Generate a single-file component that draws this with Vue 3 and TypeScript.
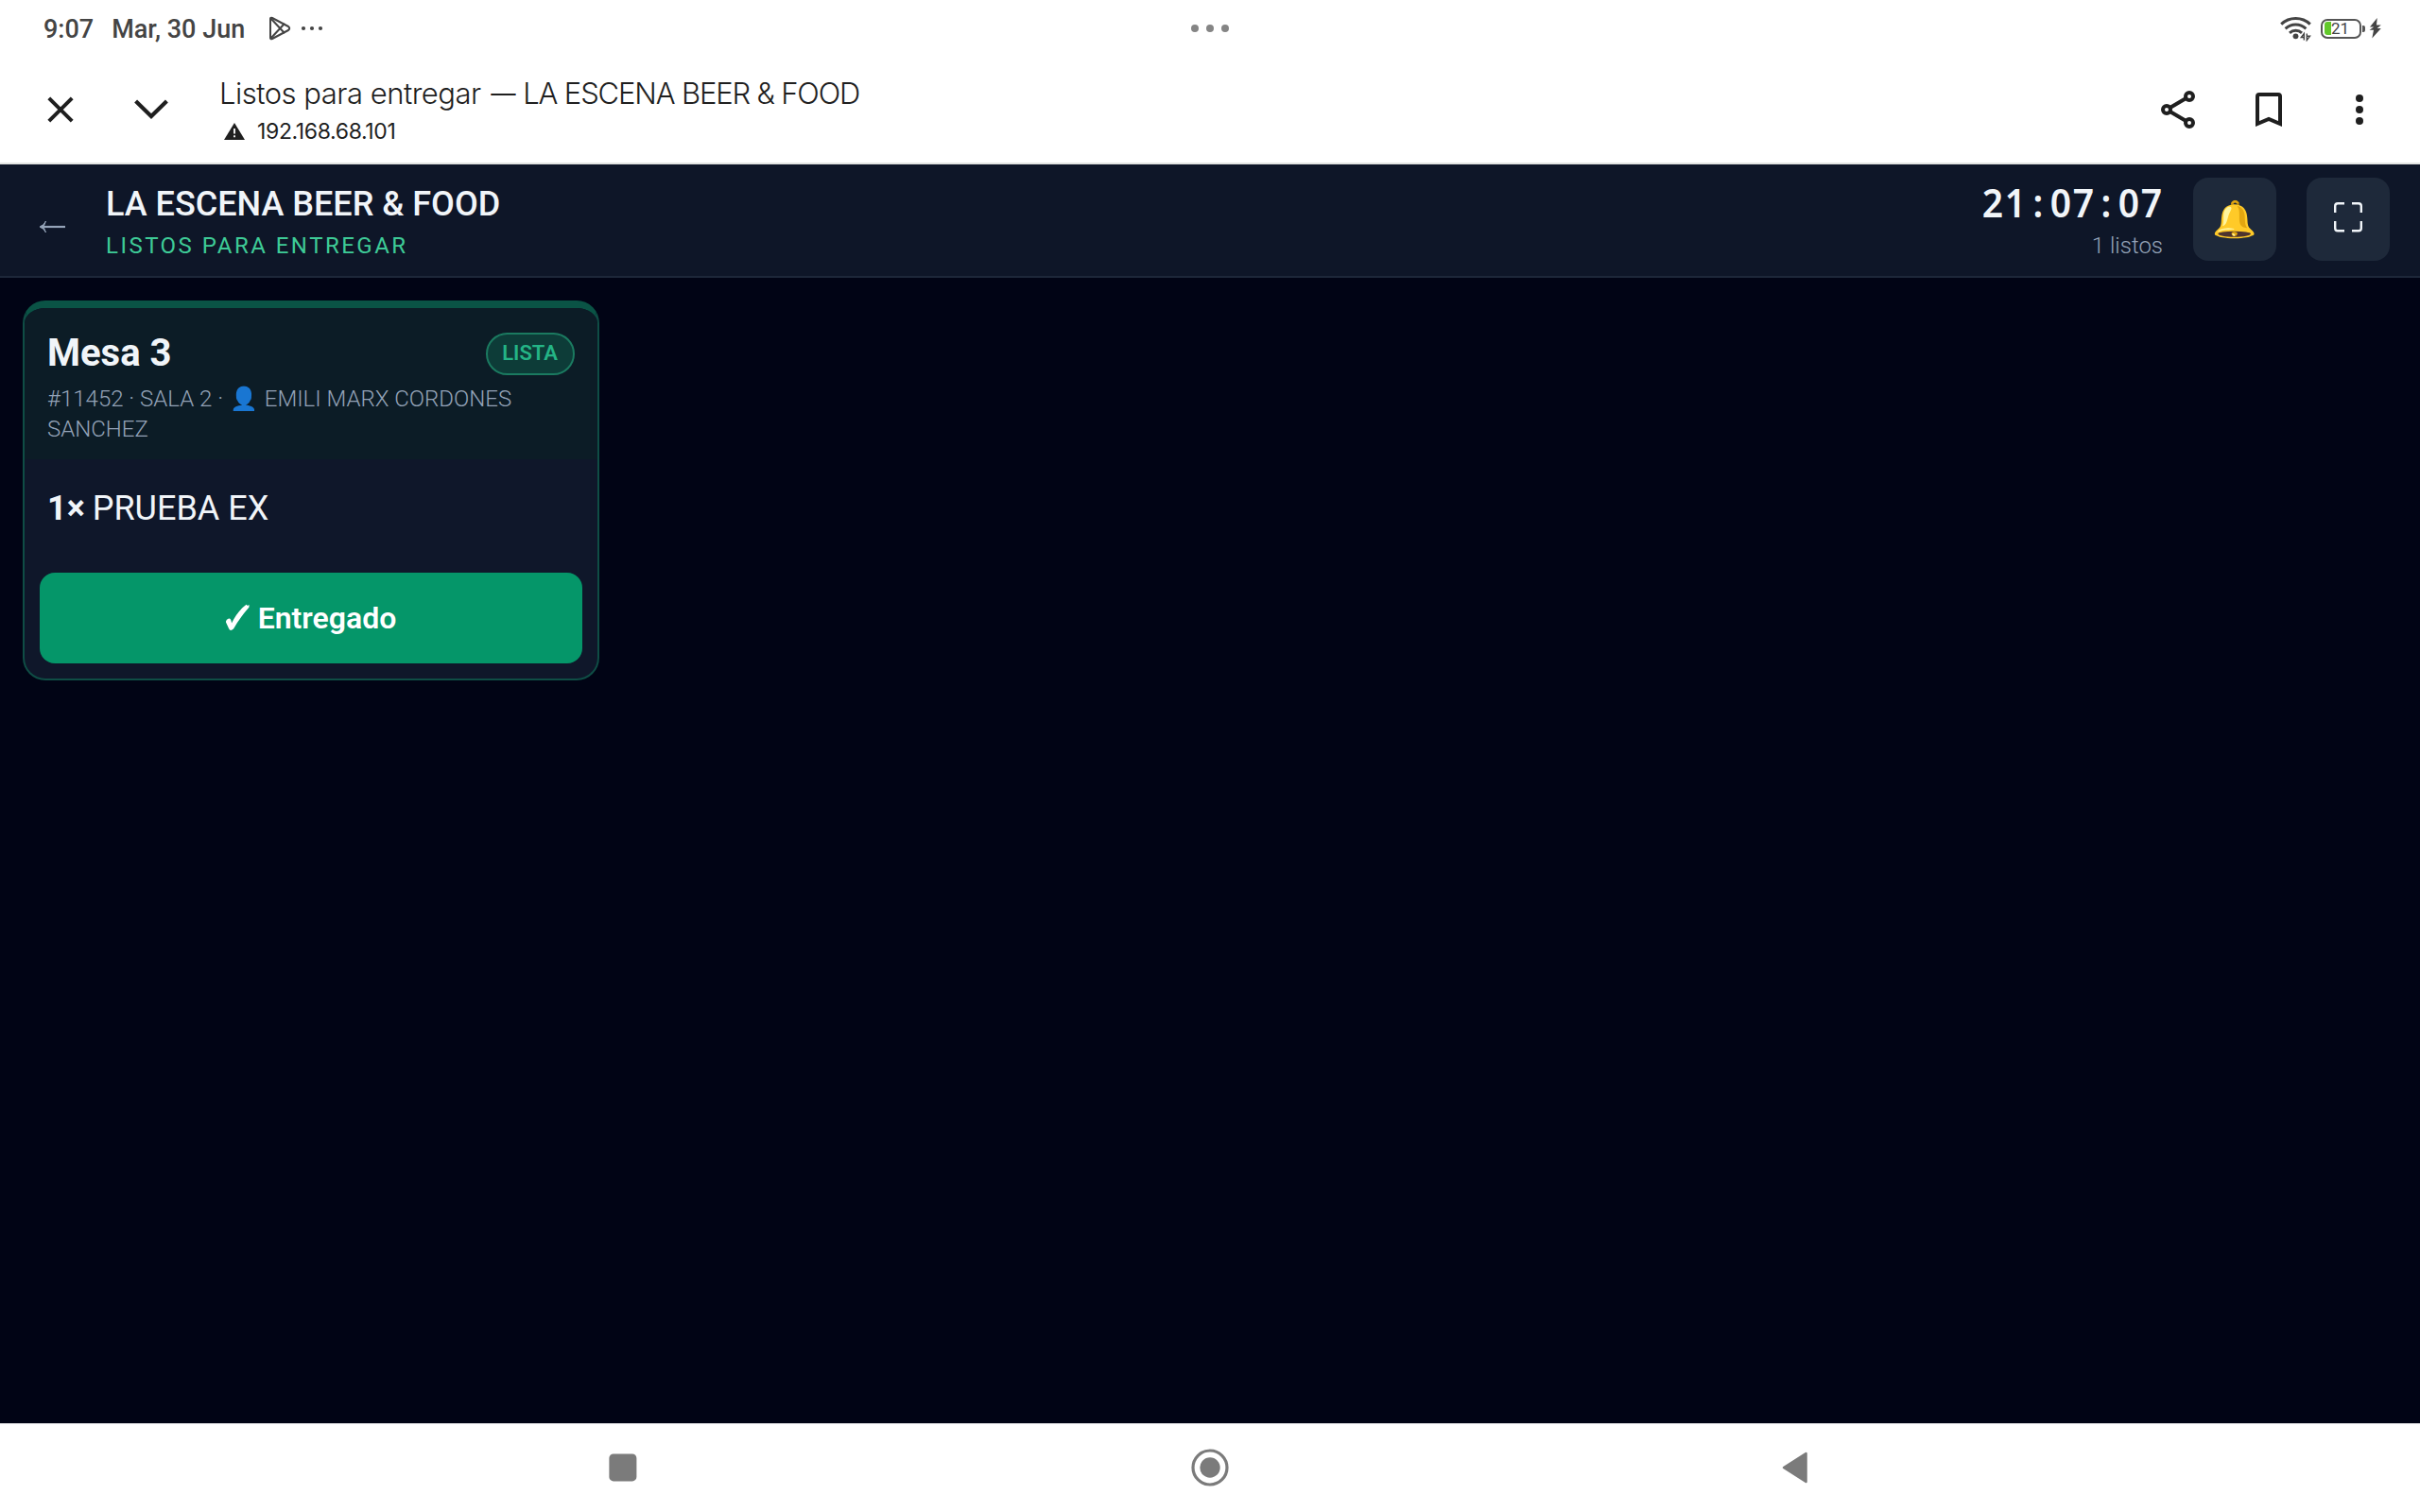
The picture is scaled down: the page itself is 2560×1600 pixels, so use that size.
<script setup lang="ts">
import { ref } from 'vue'

interface OrderItem {
  qty: number
  name: string
}
interface Order {
  id: number
  table: string
  room: string
  waiter: string
  status: string
  items: OrderItem[]
}

const clock = ref('21:07:07')
const orders = ref<Order[]>([
  {
    id: 11452,
    table: 'Mesa 3',
    room: 'SALA 2',
    waiter: 'EMILI MARX CORDONES SANCHEZ',
    status: 'LISTA',
    items: [{ qty: 1, name: 'PRUEBA EX' }],
  },
])
</script>

<template>
  <div class="screen">
    <div class="status">
      <div class="status-left">
        <span class="time">9:07</span>
        <span class="date">Mar, 30 Jun</span>
        <svg class="play" width="24" height="26" viewBox="0 0 24 26" fill="none" stroke="#444" stroke-width="2" stroke-linejoin="round" stroke-linecap="round">
          <path d="M2 3.2Q2 1.2 4 2L21 11Q23.4 13 21 15L4 24Q2 24.8 2 22.800Z" />
          <path d="M2.500 2.500L16.500 17.500M2.500 23.500L16.500 8.500" />
        </svg>
        <svg class="more" width="24" height="6" viewBox="0 0 24 6" fill="#444">
          <circle cx="3" cy="3" r="2.100" /><circle cx="12" cy="3" r="2.100" /><circle cx="21" cy="3" r="2.100" />
        </svg>
      </div>
      <svg class="handle" width="40" height="8" viewBox="0 0 40 8" fill="#858585">
        <circle cx="4" cy="4" r="4" /><circle cx="20" cy="4" r="4" /><circle cx="36" cy="4" r="4" />
      </svg>
      <div class="status-right">
        <svg class="wifi" width="34" height="28" viewBox="0 0 34 28" fill="none" stroke="#444" stroke-width="3">
          <path d="M1.200 9.600A22.500 22.500 0 0 1 31.800 9.600" />
          <path d="M5.600 14.300A16 16 0 0 1 27.400 14.300" />
          <path d="M10 18.800A9.800 9.800 0 0 1 23 18.800" />
          <circle cx="16.500" cy="22.300" r="2.900" fill="#444" stroke="none" />
          <path d="M25.300 26.500V19.500L22.300 23.500H25M28.300 19.500V26.500L31.500 22.300H28.500" stroke-width="1.400" />
        </svg>
        <div class="battery"><span class="charge"></span><span class="pct">21</span></div>
        <span class="nub"></span>
        <svg class="bolt" width="14" height="22" viewBox="0 0 14 22" fill="#444"><path d="M8.700 0L1 9.500H5.200L.5 12.800H5L3.300 21.500L12.800 11H8.600L12.800 7.500H8Z" /></svg>
      </div>
    </div>

    <div class="browser">
      <svg class="close" width="28" height="28" viewBox="0 0 28 28" stroke="#1f1f1f" stroke-width="4"><path d="M1.800 1.800L26.200 26.200M26.200 1.800L1.800 26.200" /></svg>
      <svg class="chev" width="36" height="22" viewBox="0 0 36 22" fill="none" stroke="#1f1f1f" stroke-width="4.200"><path d="M1.600 2L18 18L34.400 2" /></svg>
      <div class="page-info">
        <div class="page-title">Listos para entregar <span class="site"><span class="dash">—</span> LA ESCENA BEER &amp; FOOD</span></div>
        <div class="page-host">
          <svg width="22" height="18" viewBox="0 0 22 18"><path d="M11 0L22 18H0Z" fill="#1f1f1f" /><path d="M11 6V11.500M11 13.200V15.200" stroke="#fff" stroke-width="1.800" /></svg>
          <span>192.168.68.101</span>
        </div>
      </div>
      <div class="browser-actions">
        <svg width="36" height="40" viewBox="0 0 36 40" fill="none" stroke="#1f1f1f" stroke-width="4"><circle cx="30" cy="6" r="4" /><circle cx="6" cy="20" r="4" /><circle cx="30" cy="34" r="4" /><path d="M9.500 18L26.500 8M9.500 22L26.500 32" /></svg>
        <svg class="bookmark" width="28" height="36" viewBox="0 0 28 36" fill="none" stroke="#1f1f1f" stroke-width="4"><path d="M2 33V4Q2 2 4 2H24Q26 2 26 4V33L14 28Z" /></svg>
        <svg class="kebab" width="8" height="32" viewBox="0 0 8 32" fill="#1f1f1f"><circle cx="4" cy="4" r="4" /><circle cx="4" cy="16" r="4" /><circle cx="4" cy="28" r="4" /></svg>
      </div>
    </div>

    <header class="topbar">
      <svg class="back" width="28" height="14" viewBox="0 0 28 14" fill="none" stroke="#94a3b8" stroke-width="2.200"><path d="M2 7H28" /><path d="M7.500 1Q5.500 5.500 1 7Q5.500 8.500 7.500 13L5 7Z" fill="#94a3b8" stroke-width="1" /></svg>
      <div class="brand">
        <h1>LA ESCENA BEER &amp; FOOD</h1>
        <p>LISTOS PARA ENTREGAR</p>
      </div>
      <div class="clock-box">
        <div class="clock"><span v-for="(c, i) in clock" :key="i">{{ c }}</span></div>
        <div class="count">{{ orders.length }} listos</div>
      </div>
      <button class="tool bell">🔔</button>
      <button class="tool expand">
        <svg width="30" height="32" viewBox="0 0 30 32" fill="none" stroke="#f1f5f9" stroke-width="2.400"><path d="M1.200 11V4Q1.200 1.300 4 1.300H11M19 1.300H26Q28.800 1.300 28.800 4V11M28.800 20V27.500Q28.800 30.300 26 30.300H19M11 30.300H4Q1.200 30.300 1.200 27.500V20" /></svg>
      </button>
    </header>

    <main class="board">
      <article v-for="o in orders" :key="o.id" class="card">
        <div class="card-head">
          <div class="card-row">
            <h2>{{ o.table }}</h2>
            <span class="badge">{{ o.status }}</span>
          </div>
          <p class="meta">#{{ o.id }} · {{ o.room }} · <span class="emoji">👤</span> {{ o.waiter }}</p>
        </div>
        <div class="items">
          <div v-for="it in o.items" :key="it.name"><b>{{ it.qty }}×</b> {{ it.name }}</div>
        </div>
        <button class="deliver">
          <svg width="26" height="30" viewBox="0 0 26 30" fill="#fff"><path d="M0 19.500Q-.3 16.500 3 15.500Q5.500 15 6 20.500Q12 8 21.500 .8L23 2L24.500 .8V3.500Q14.500 15 8 26.500Q4.500 29.500 3 26Z" /></svg>
          <span>Entregado</span>
        </button>
      </article>
    </main>

    <nav class="navbar">
      <svg class="recent" width="30" height="30" viewBox="0 0 30 30"><rect x=".4" y=".4" width="29" height="29" rx="4.500" fill="#7b7b7b" /></svg>
      <svg class="home" width="40" height="40" viewBox="0 0 40 40"><circle cx="20" cy="20" r="18" fill="none" stroke="#7b7b7b" stroke-width="3.200" /><circle cx="20" cy="20" r="10.700" fill="#7b7b7b" /></svg>
      <svg class="prev" width="28" height="34" viewBox="0 0 28 34"><path d="M2 17L25.500 2V32Z" fill="#7b7b7b" stroke="#7b7b7b" stroke-width="2.500" stroke-linejoin="round" /></svg>
    </nav>
  </div>
</template>

<style>
body { margin: 0; background: #010415; }
</style>

<style scoped>
* { box-sizing: border-box; margin: 0; }
svg { display: block; flex: none; }
.screen {
  width: 2560px; height: 1600px; overflow: hidden;
  display: flex; flex-direction: column;
  font-family: Roboto, "Noto Sans", sans-serif;
  background: #010415;
}
.status {
  height: 60px; background: #fff; color: #444;
  display: grid; grid-template-columns: 1fr 40px 1fr; align-items: center;
  font-size: 27px; font-weight: 500; line-height: 32px;
}
.status-left { display: flex; align-items: center; padding-left: 46px; }
.time, .date { padding-top: 2px; }
.date { margin-left: 19px; }
.play { margin-left: 25px; }
.more { margin-left: 10px; }
.status-right { display: flex; align-items: center; justify-content: flex-end; padding-right: 40px; }
.battery {
  width: 43px; height: 21px; margin-left: 9px; border: 2px solid #555; border-radius: 7px;
  display: flex; align-items: center; padding: 1px 2px; line-height: 17px;
}
.charge { width: 7px; height: 14px; border-radius: 3px 0 0 3px; background: #62c92b; }
.pct { font-size: 17px; font-weight: 400; line-height: 15px; }
.nub { width: 3px; height: 7px; margin-left: 1px; background: #555; border-radius: 0 2px 2px 0; }
.bolt { margin-left: 4px; }

.browser {
  height: 114px; background: #fff; border-bottom: 2px solid #e3e5e3; color: #1f1f1f;
  display: flex; align-items: center; padding: 0 60px 0 50px;
}
.chev { margin-left: 64px; }
.page-info { margin-left: 54px; padding-top: 6px; font-family: Inter, "Open Sans", sans-serif; }
.page-title { font-size: 31px; font-weight: 300; line-height: 40px; letter-spacing: -0.5px; white-space: nowrap; }
.site { letter-spacing: -1.160px; }
.dash { display: inline-block; margin: 0 -1px 0 0; transform: scaleX(0.85); }
.page-host { display: flex; align-items: center; gap: 13px; padding-left: 5px; font-size: 23px; line-height: 41px; letter-spacing: -0.36px; }
.browser-actions { margin-left: auto; display: flex; align-items: center; }
.bookmark { margin-left: 64px; }
.kebab { margin-left: 78px; }

.topbar {
  height: 120px; background: #0e1628; border-bottom: 2px solid #1d2739; color: #f1f5f9;
  display: flex; align-items: center; padding: 0 32px 2px 40px;
}
.back { margin-top: 16px; margin-left: 1px; }
.brand { margin-left: 43px; margin-top: 10px; }
.brand h1 { font-size: 36px; font-weight: 500; line-height: 45px; }
.brand p { font-size: 24px; line-height: 42px; letter-spacing: 2.480px; color: #3ecb97; }
.clock-box { margin-left: auto; margin-top: 6px; text-align: right; }
.clock { display: flex; font-family: "Noto Sans", sans-serif; font-size: 42px; font-weight: 600; line-height: 50px; }
.clock span { width: 24px; display: flex; justify-content: center; transform: scaleX(0.93); }
.count { font-size: 24px; font-weight: 300; line-height: 42px; color: #94a3b8; }
.tool {
  width: 88px; height: 88px; margin-left: 32px; border: 0; border-radius: 16px; background: #1e293a;
  display: flex; align-items: center; justify-content: center; padding: 0;
}
.bell { font-size: 38px; font-family: "Noto Color Emoji", sans-serif; padding: 0 0 1px 1px; }
.expand { padding-bottom: 4px; }

.board { flex: 1; padding: 24px; display: flex; align-items: flex-start; }
.card {
  width: 610px; border: 2px solid #0f4d45; border-top: 8px solid #0a5345; border-radius: 24px;
  background: #0f172a; overflow: hidden;
}
.card-head { height: 160px; padding: 24px; background: #0c1c26; }
.card-row { display: flex; justify-content: space-between; align-items: center; height: 48px; }
.card-row h2 { font-size: 40px; font-weight: 700; color: #f1f5f9; line-height: 48px; }
.badge {
  height: 45px; border: 2px solid #1b7a60; border-radius: 23px; background: #0d3c38; color: #24b486;
  font-size: 22px; font-weight: 600; line-height: 40px; padding: 0 16px 0 15px;
}
.meta { margin-top: 8px; font-size: 24px; font-weight: 300; line-height: 32px; color: #94a3b8; }
.emoji { font-family: "Noto Color Emoji", sans-serif; margin: 0 1px; }
.items { height: 120px; padding: 25px 24px 0; font-size: 36px; line-height: 54px; color: #f1f5f9; }
.items b { font-weight: 700; margin-right: -1px; }
.deliver {
  display: flex; align-items: center; justify-content: center; gap: 8px;
  width: 574px; height: 96px; margin: 0 16px 16px; padding: 0; border: 0; border-radius: 16px;
  background: #059669; color: #fff; font: 600 32px/40px Roboto, sans-serif;
}

.navbar {
  height: 94px; background: #fff; border-top: 1px solid #d9d9dc;
  display: flex; align-items: center; padding: 0 0 1px 644px;
}
.home { margin-left: 586px; }
.prev { margin-left: 585px; }
</style>
